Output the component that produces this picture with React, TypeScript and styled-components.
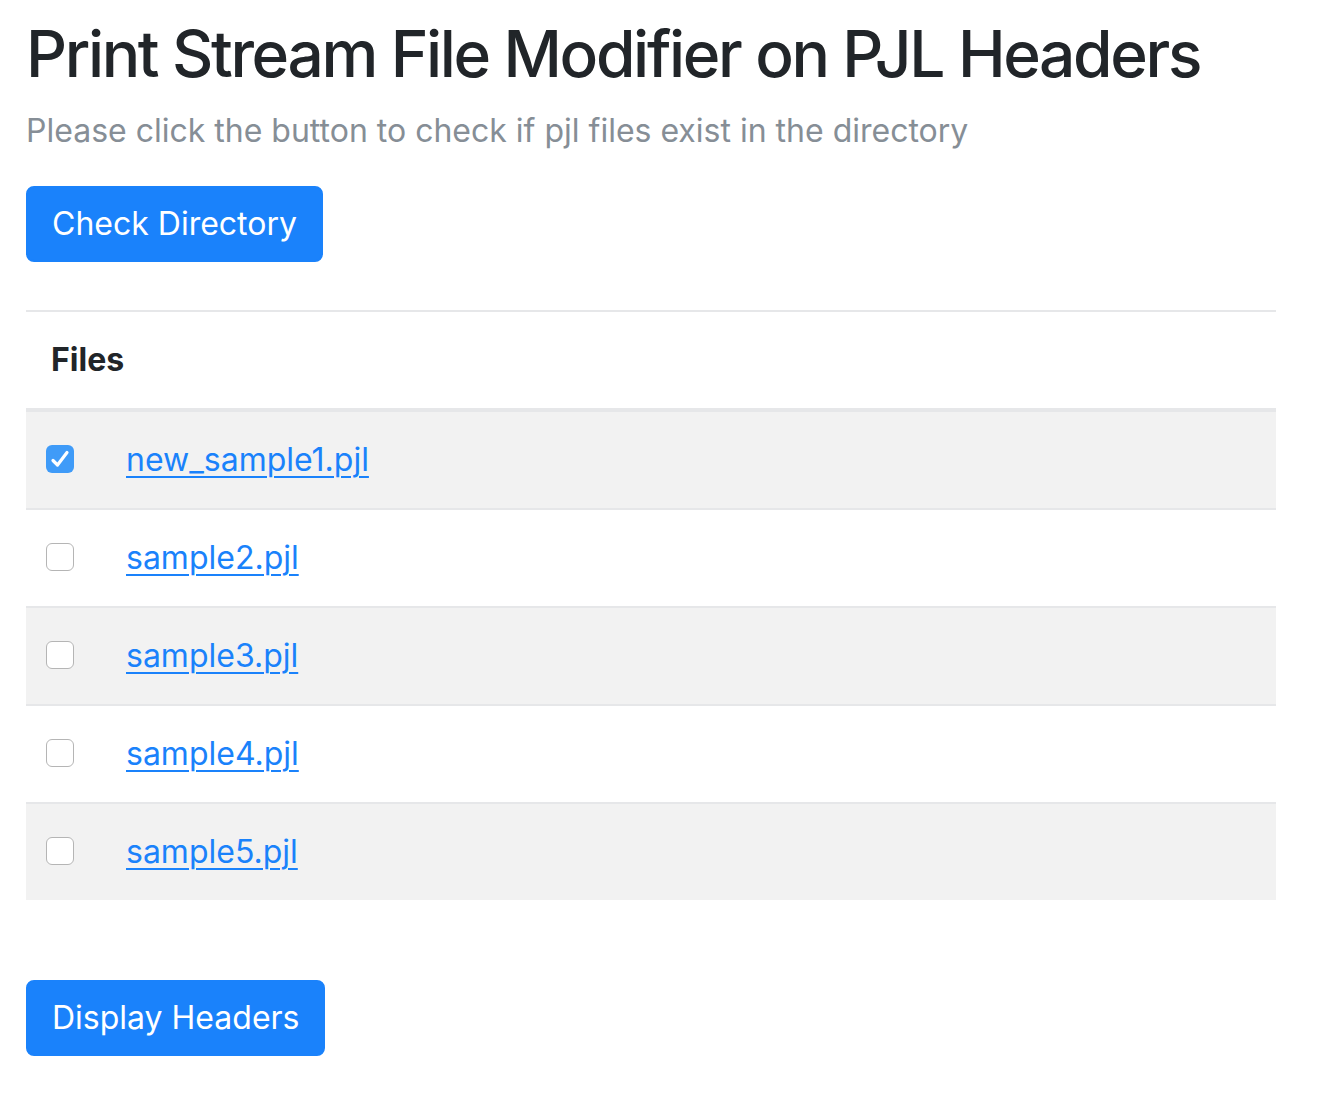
import React, { useState } from "react";
import styled, { createGlobalStyle } from "styled-components";

const Global = createGlobalStyle`
  html, body { margin: 0; padding: 0; background: #fff; }
  body {
    font-family: Inter, "Liberation Sans", Arial, sans-serif;
    color: #212529;
    -webkit-font-smoothing: antialiased;
  }
`;

const Page = styled.main`
  width: 1250px;
  padding: 8px 0 40px 26px;
  display: flex;
  flex-direction: column;
  align-items: flex-start;
`;

const Title = styled.h1`
  margin: 8px 0 14px;
  font-size: 64px;
  font-weight: 500;
  line-height: 1.2;
  letter-spacing: -2.35px;
  color: #212529;
`;

const Subtitle = styled.p`
  margin: 0 0 31px;
  font-size: 32px;
  line-height: 48px;
  color: #868e96;
`;

const Button = styled.button<{ $mt?: number }>`
  margin-top: ${(p) => p.$mt ?? 0}px;
  font-family: inherit;
  font-size: 32px;
  line-height: 48px;
  padding: 12px 24px;
  border: 2px solid #1a82fb;
  border-radius: 8px;
  background: #1a82fb;
  color: #fff;
  cursor: pointer;
`;

const Table = styled.table`
  width: 1250px;
  margin-top: 48px;
  border-collapse: collapse;
  font-size: 32px;
`;

const HeadCell = styled.th`
  text-align: left;
  font-weight: 700;
  padding: 24px 25px;
  line-height: 48px;
  border-top: 2px solid #e6e7e9;
  border-bottom: 4px solid #e6e7e9;
`;

const Row = styled.tr<{ $striped: boolean }>`
  background: ${(p) => (p.$striped ? "#f2f2f2" : "#fff")};
`;

const Cell = styled.td`
  padding: 24px 24px 24px 20px;
  line-height: 48px;
  vertical-align: middle;
  border-top: 2px solid #e6e7e9;
`;

const RowInner = styled.div`
  display: flex;
  align-items: center;
  gap: 52px;
`;

const Box = styled.span<{ $checked: boolean }>`
  width: 28px;
  height: 28px;
  margin-top: -2px;
  box-sizing: border-box;
  border-radius: 6px;
  display: inline-flex;
  align-items: center;
  justify-content: center;
  background: ${(p) => (p.$checked ? "#3f9bf8" : "#fff")};
  border: ${(p) => (p.$checked ? "none" : "1.5px solid #b5b5b5")};
  cursor: pointer;
  flex: none;
`;

const FileLink = styled.a`
  color: #1a82fb;
  text-decoration: underline;
  text-decoration-thickness: 2px;
  text-underline-offset: 5px;
  font-size: 32px;
`;

const files = ["new_sample1.pjl", "sample2.pjl", "sample3.pjl", "sample4.pjl", "sample5.pjl"];

export default function App() {
  const [checked, setChecked] = useState<boolean[]>([true, false, false, false, false]);
  return (
    <>
      <Global />
      <Page>
        <Title>Print Stream File Modifier on PJL Headers</Title>
        <Subtitle>Please click the button to check if pjl files exist in the directory</Subtitle>
        <Button>Check Directory</Button>
        <Table>
          <thead>
            <tr>
              <HeadCell>Files</HeadCell>
            </tr>
          </thead>
          <tbody>
            {files.map((f, i) => (
              <Row key={f} $striped={i % 2 === 0}>
                <Cell>
                  <RowInner>
                    <Box
                      $checked={checked[i]}
                      onClick={() => setChecked((c) => c.map((v, j) => (j === i ? !v : v)))}
                    >
                      {checked[i] && (
                        <svg width="28" height="28" viewBox="0 0 28 28">
                          <path d="M7 15.5 L11.5 20 L21 7.5" fill="none" stroke="#fff" strokeWidth="3.2" strokeLinecap="round" strokeLinejoin="round" />
                        </svg>
                      )}
                    </Box>
                    <FileLink href="#">{f}</FileLink>
                  </RowInner>
                </Cell>
              </Row>
            ))}
          </tbody>
        </Table>
        <Button $mt={80}>Display Headers</Button>
      </Page>
    </>
  );
}
